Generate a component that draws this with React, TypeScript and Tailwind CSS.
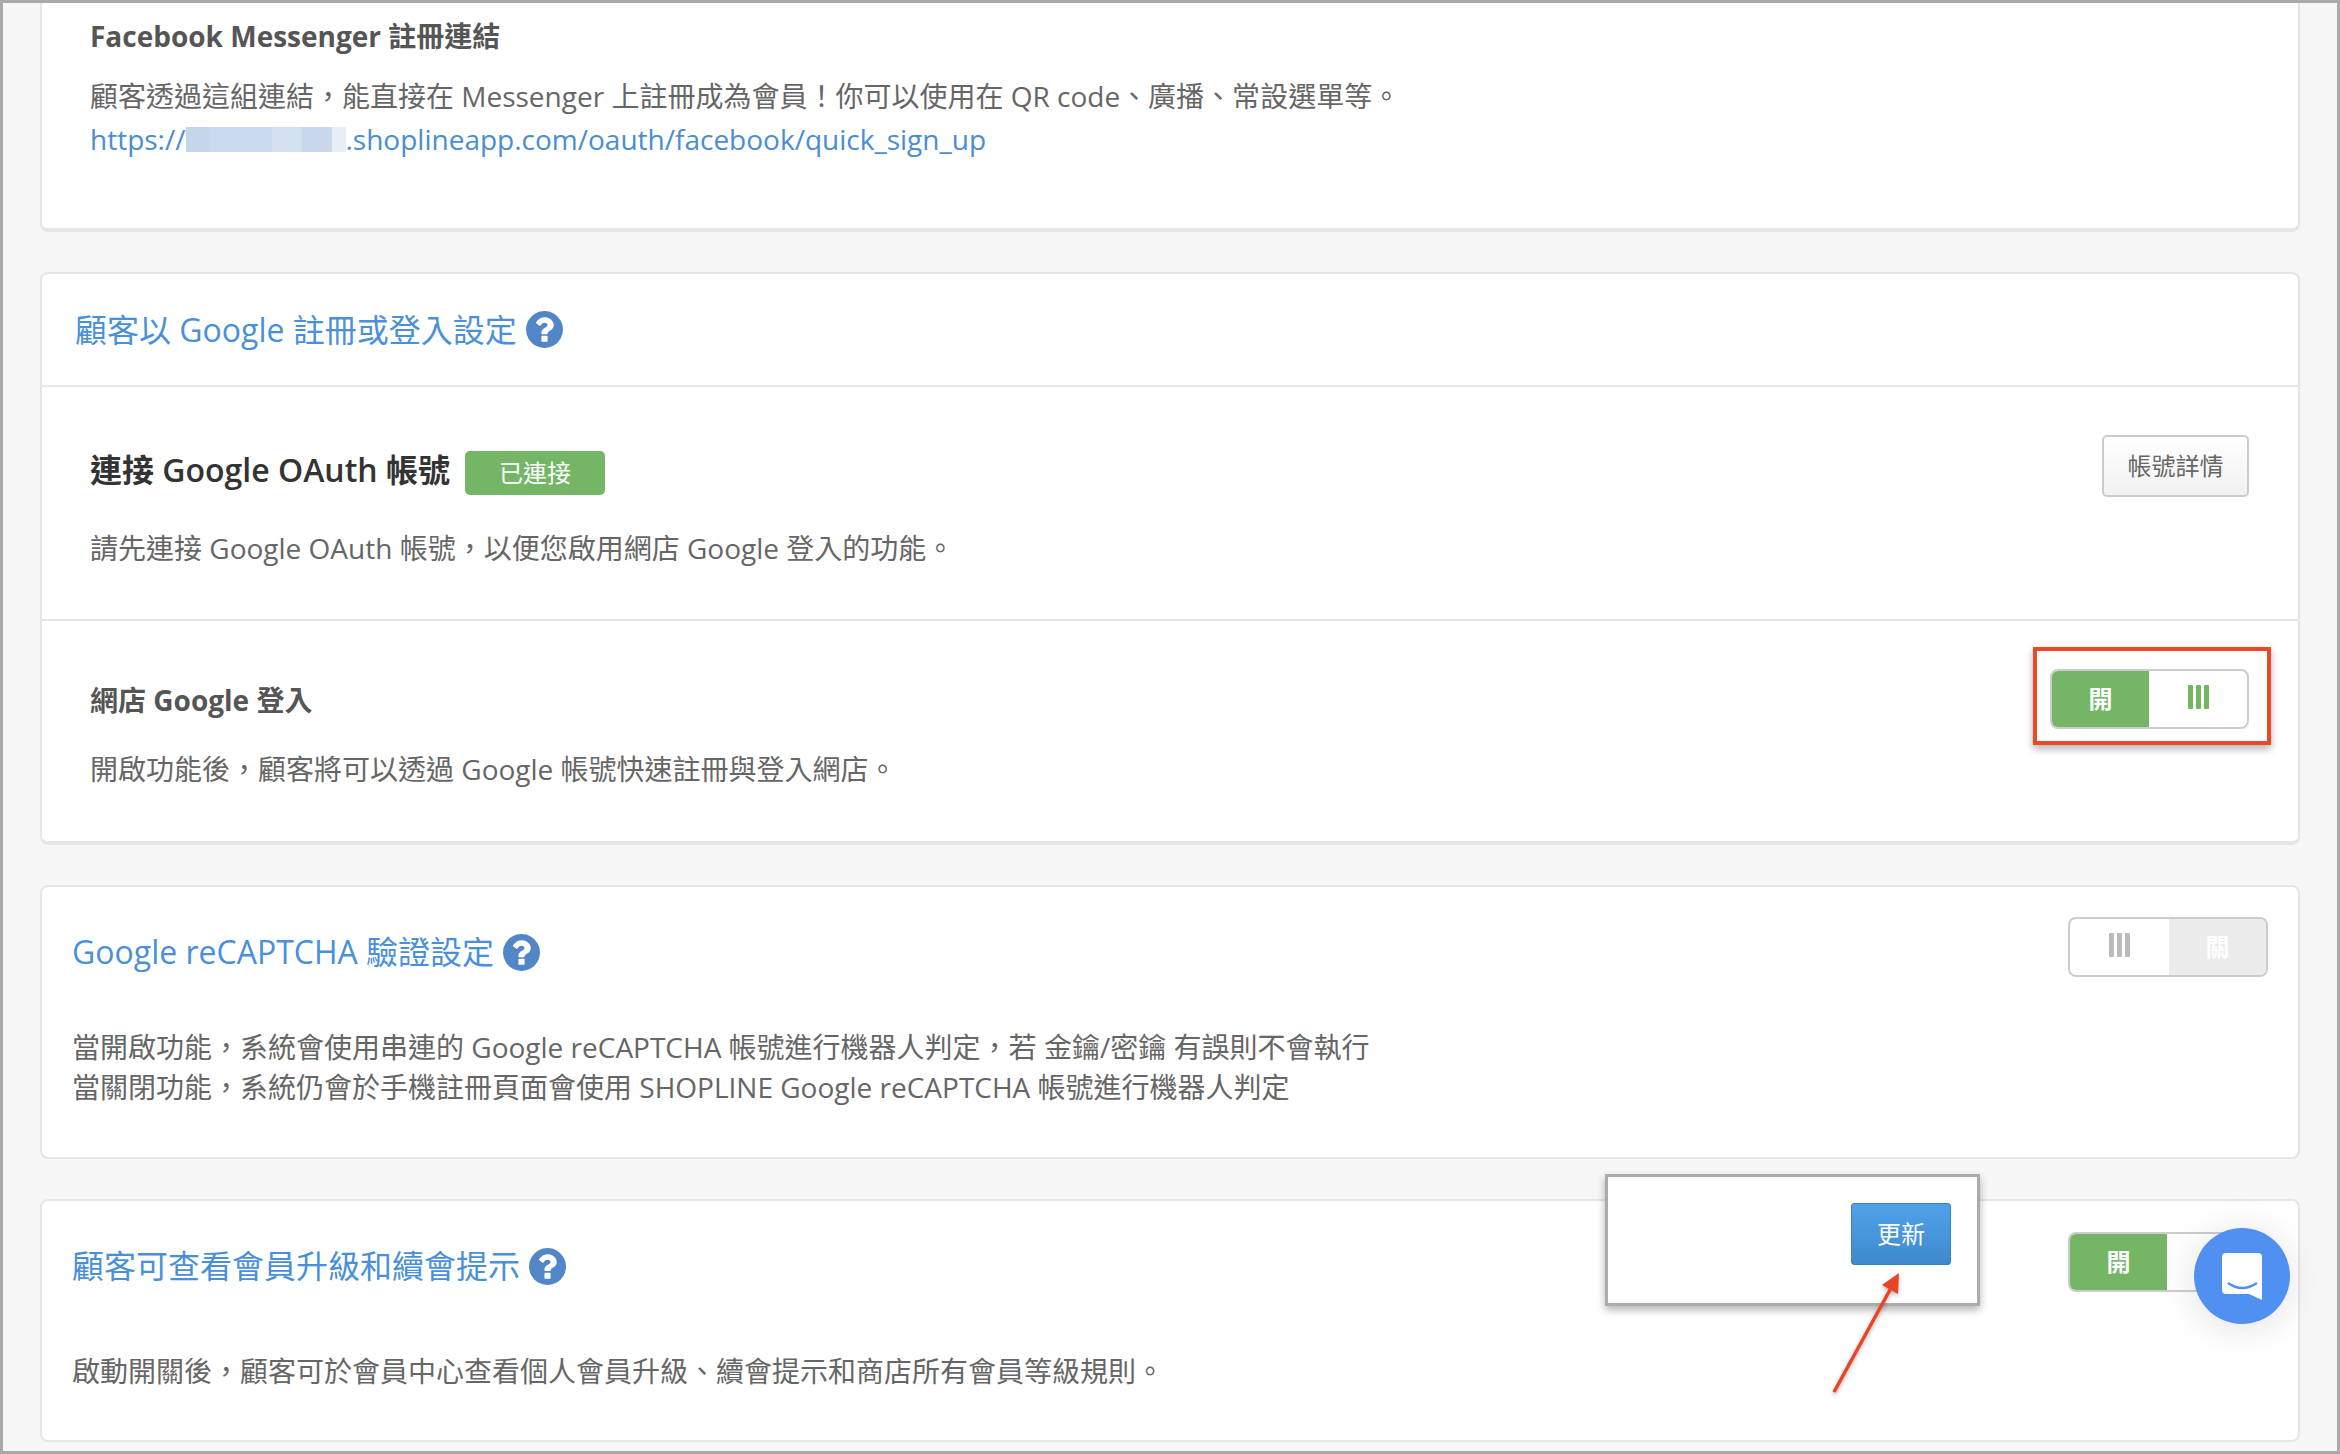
import React from "react";

const Help = () => (
  <svg className="shrink-0" width="37" height="37" viewBox="128 128 1536 1536" fill="#5286c6">
    <path d="M1024 1376v-192q0-14-9-23t-23-9h-192q-14 0-23 9t-9 23v192q0 14 9 23t23 9h192q14 0 23-9t9-23zm256-672q0-88-55.5-163t-138.5-116-170-41q-243 0-371 213-15 24 8 42l132 100q7 6 19 6 16 0 25-12 53-68 86-92 34-24 86-24 48 0 85.5 26t37.5 59q0 38-20 61t-68 45q-63 28-115.5 86.5t-52.5 125.5v36q0 14 9 23t23 9h192q14 0 23-9t9-23q0-19 21.5-49.5t54.5-49.5q32-18 49-28.5t46-35 44.5-48 28-60.5 12.5-81zm384 192q0 209-103 385.5t-279.5 279.5-385.5 103-385.5-103-279.5-279.5-103-385.5 103-385.5 279.5-279.5 385.5-103 385.5 103 279.5 279.5 103 385.5z" />
  </svg>
);

const Title = ({ children }: { children: React.ReactNode }) => (
  <div className="flex items-center gap-[9px] text-[32px] leading-[48px] text-[#4a90d9]">
    <span>{children}</span>
    <Help />
  </div>
);

const Bars = ({ color }: { color: string }) => (
  <div className="flex gap-[3px] h-[24px] pointer-events-none">
    <div className={`w-[5px] h-full rounded-[1px] ${color}`} />
    <div className={`w-[5px] h-full rounded-[1px] ${color}`} />
    <div className={`w-[5px] h-full rounded-[1px] ${color}`} />
  </div>
);

const OnToggle = ({ width }: { width: string }) => (
  <div className={`flex ${width} h-[60px] border-2 border-[#cccccc] rounded-[8px] overflow-hidden bg-white shrink-0`}>
    <div className="w-[97px] bg-[#74b666] text-white text-[24px] font-bold flex items-center justify-center">開</div>
    <div className="flex-1 flex items-center justify-center pb-[4px]">
      <Bars color="bg-[#74b666]" />
    </div>
  </div>
);

const OffToggle = () => (
  <div className="flex w-[200px] h-[60px] border-2 border-[#cccccc] rounded-[8px] overflow-hidden bg-white shrink-0">
    <div className="w-[99px] flex items-center justify-center pb-[4px]">
      <Bars color="bg-[#bbbbbb]" />
    </div>
    <div className="flex-1 bg-[#ececec] text-white text-[24px] font-bold flex items-center justify-center">關</div>
  </div>
);

export default function App() {
  return (
    <div
      className="relative w-[2340px] h-[1454px] overflow-hidden bg-[#f7f7f7] border-[3px] border-[#a9a9a9] text-[28px] text-[#666666]"
      style={{ fontFamily: '"Open Sans", "Noto Sans CJK TC", sans-serif' }}
    >
      <div className="flex flex-col gap-[40px] px-[37px]">
        {/* Card 1 */}
        <div className="h-[229px] bg-white border-l-2 border-r-2 border-b-4 border-[#e6e6e6] rounded-b-[8px] pl-[48px] pt-[13px]">
          <div className="text-[28px] leading-[40px] font-bold text-[#555555]">Facebook Messenger 註冊連結</div>
          <div className="mt-[18px] leading-[44px]">顧客透過這組連結，能直接在 Messenger 上註冊成為會員！你可以使用在 QR code、廣播、常設選單等。</div>
          <div className="-mt-[1px] flex items-center h-[44px] leading-[44px] text-[#4a8dd2]">
            <span>https://</span>
            <div className="flex h-[25px]">
              <div className="w-[24px] bg-[#c5d6ea]" />
              <div className="w-[62px] bg-[#c9d9ee]" />
              <div className="w-[30px] bg-[#d4e1f0]" />
              <div className="w-[30px] bg-[#c8d8ea]" />
              <div className="w-[14px] bg-[#e8eef6]" />
            </div>
            <span>.shoplineapp.com/oauth/facebook/quick_sign_up</span>
          </div>
        </div>

        {/* Card 2 */}
        <div className="h-[573px] bg-white border-2 border-b-4 border-[#e6e6e6] rounded-[8px] flex flex-col">
          <div className="h-[113px] shrink-0 border-b-2 border-[#e6e6e6] flex items-center pl-[33px]">
            <Title>顧客以 Google 註冊或登入設定</Title>
          </div>
          <div className="h-[234px] shrink-0 border-b-2 border-[#e6e6e6] flex justify-between items-start pl-[48px] pr-[49px] pt-[48px]">
            <div className="mt-[16px]">
              <div className="flex items-center h-[44px]">
                <span className="mb-[6px] text-[32px] font-semibold text-[#333333]">連接 Google OAuth 帳號</span>
                <span className="ml-[15px] w-[140px] h-[44px] rounded-[5px] bg-[#74b666] text-white text-[24px] flex items-center justify-center">已連接</span>
              </div>
              <div className="mt-[31px] leading-[44px]">請先連接 Google OAuth 帳號，以便您啟用網店 Google 登入的功能。</div>
            </div>
            <div className="w-[147px] h-[62px] border-2 border-[#cccccc] rounded-[5px] bg-gradient-to-b from-white to-[#f1f1f1] text-[24px] text-[#666666] flex items-center justify-center">帳號詳情</div>
          </div>
          <div className="flex justify-between items-start pl-[48px] pr-[49px] pt-[48px]">
            <div className="mt-[9px]">
              <div className="leading-[44px] font-bold text-[#555555]">網店 Google 登入</div>
              <div className="mt-[25px] leading-[44px]">開啟功能後，顧客將可以透過 Google 帳號快速註冊與登入網店。</div>
            </div>
            <OnToggle width="w-[199px]" />
          </div>
        </div>

        {/* Card 3 */}
        <div className="h-[274px] bg-white border-2 border-[#e6e6e6] rounded-[8px] flex justify-between items-start px-[30px] pt-[30px]">
          <div className="mt-[11px]">
            <Title>Google reCAPTCHA 驗證設定</Title>
            <div className="mt-[51px] leading-[40px]">
              <div>當開啟功能，系統會使用串連的 Google reCAPTCHA 帳號進行機器人判定，若 金鑰/密鑰 有誤則不會執行</div>
              <div>當關閉功能，系統仍會於手機註冊頁面會使用 SHOPLINE Google reCAPTCHA 帳號進行機器人判定</div>
            </div>
          </div>
          <OffToggle />
        </div>

        {/* Card 4 */}
        <div className="h-[243px] bg-white border-2 border-[#e6e6e6] rounded-[8px] flex justify-between items-start px-[30px] pt-[31px]">
          <div className="mt-[10px]">
            <Title>顧客可查看會員升級和續會提示</Title>
            <div className="mt-[61px] leading-[40px]">啟動開關後，顧客可於會員中心查看個人會員升級、續會提示和商店所有會員等級規則。</div>
          </div>
          <OnToggle width="w-[200px]" />
        </div>
      </div>

      {/* Red highlight around the switch */}
      <div className="absolute left-[2030px] top-[644px] w-[238px] h-[98px] border-4 border-[#ee4626] shadow-[0_4px_8px_rgba(0,0,0,0.3)]" />

      {/* Pasted screenshot of the update button */}
      <div className="absolute left-[1602px] top-[1171px] w-[375px] h-[132px] bg-white border-[3px] border-[#ababab] shadow-[0_4px_8px_rgba(0,0,0,0.3)]">
        <div className="absolute left-[243px] top-[26px] w-[100px] h-[62px] rounded-[3px] border border-[#3a7fbe] bg-gradient-to-b from-[#4fa2ea] to-[#4089cc] text-white text-[24px] flex items-center justify-center">更新</div>
      </div>

      {/* Red arrow */}
      <svg className="absolute left-[1820px] top-[1260px] drop-shadow-[0_2px_2px_rgba(0,0,0,0.3)]" width="90" height="140" viewBox="0 0 90 140">
        <line x1="11" y1="129" x2="68" y2="25" stroke="#ea4426" strokeWidth="3.5" />
        <polygon points="76,10 59,22 75,31" fill="#ea4426" />
      </svg>

      {/* Chat launcher */}
      <div className="absolute left-[2191px] top-[1225px] w-[96px] h-[96px] rounded-full bg-[#5090f0] shadow-[0_4px_40px_rgba(0,0,0,0.12)] flex items-center justify-center">
        <svg width="40" height="47" viewBox="0 0 40 47">
          <path d="M4 0H36a4 4 0 0 1 4 4V47L27 41H4a4 4 0 0 1-4-4V4a4 4 0 0 1 4-4z" fill="#ffffff" />
          <path d="M6 30Q20 40 35 30" fill="none" stroke="#5090f0" strokeWidth="2.5" />
        </svg>
      </div>
    </div>
  );
}
